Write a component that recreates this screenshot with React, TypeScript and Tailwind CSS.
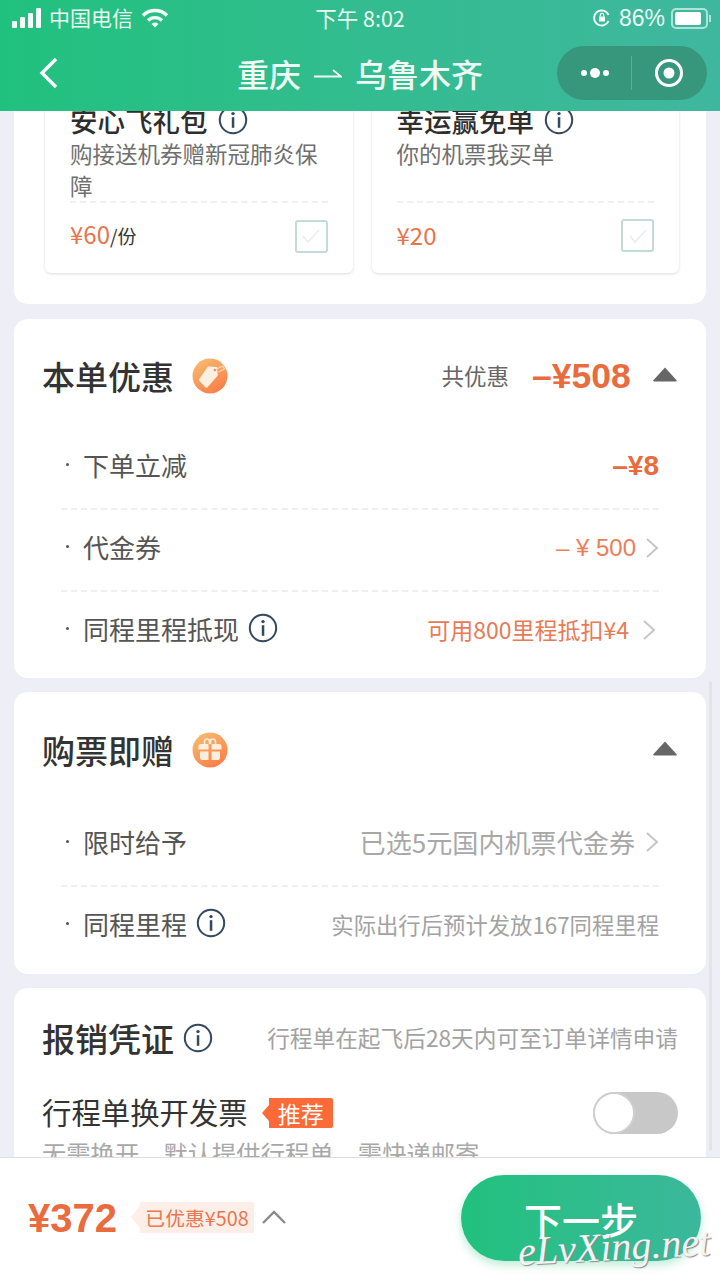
import React from "react";

const FONT = { fontFamily: '"Noto Sans CJK SC","Liberation Sans",sans-serif' };

function Info({ size = 30, className = "" }: { size?: number; className?: string }) {
  return (
    <svg width={size} height={size} viewBox="0 0 30 30" className={`shrink-0 ${className}`} fill="none">
      <circle cx="15" cy="15" r="13.2" stroke="#34495e" strokeWidth="2" />
      <circle cx="15" cy="8.6" r="1.7" fill="#34495e" />
      <rect x="13.8" y="12.2" width="2.5" height="10.6" fill="#34495e" />
    </svg>
  );
}

function Chevron({ className = "" }: { className?: string }) {
  return (
    <svg width="14" height="22" viewBox="0 0 14 22" className={`shrink-0 ${className}`} fill="none">
      <path d="M2 2l10 9-10 9" stroke="#c6c6c6" strokeWidth="2" />
    </svg>
  );
}

function Caret() {
  return (
    <svg width="24" height="15" viewBox="0 0 24 15" className="shrink-0">
      <path d="M12 0.5L23.6 13.2Q24 14.5 22.5 14.5H1.5Q0 14.5 0.4 13.2Z" fill="#666" />
    </svg>
  );
}

function TagBadge() {
  return (
    <svg width="36" height="36" viewBox="0 0 36 36" className="shrink-0">
      <defs>
        <linearGradient id="tg" x1="0.2" y1="0" x2="0.8" y2="1">
          <stop offset="0" stopColor="#f6bb70" />
          <stop offset="1" stopColor="#fb7b45" />
        </linearGradient>
      </defs>
      <circle cx="18" cy="18" r="17.5" fill="url(#tg)" />
      <path d="M16 8.5l9 0.5 0.8 8.5L15.5 29.2a1.6 1.6 0 0 1-2.2 0L7.4 23a1.6 1.6 0 0 1 0-2.2z" fill="#fdf0e2" />
      <circle cx="23" cy="12" r="1.3" fill="#d98d58" />
      <path d="M23.5 11.5l7-3.5 2 3-6 3" fill="none" stroke="#fbd9b8" strokeWidth="1.2" />
    </svg>
  );
}

function GiftBadge() {
  return (
    <svg width="36" height="36" viewBox="0 0 36 36" className="shrink-0">
      <defs>
        <linearGradient id="gg" x1="0.2" y1="0" x2="0.8" y2="1">
          <stop offset="0" stopColor="#f6bb70" />
          <stop offset="1" stopColor="#fb7b45" />
        </linearGradient>
      </defs>
      <circle cx="18" cy="18" r="17.5" fill="url(#gg)" />
      <path d="M12.5 12V9.5a2.5 2.5 0 0 1 5 0V12M18.5 12V9.5a2.5 2.5 0 0 1 5 0V12" fill="none" stroke="#fdeedd" strokeWidth="1.6" />
      <path d="M6.5 14a2 2 0 0 1 2-2h8v5.5H6.5zM19.5 12h8a2 2 0 0 1 2 2v3.5h-10zM8 19.5h8.5V28H10a2 2 0 0 1-2-2zM19.5 19.5H28V26a2 2 0 0 1-2 2h-6.5z" fill="#fdeedd" />
    </svg>
  );
}

function Check() {
  return (
    <div className="w-[33px] h-[33px] rounded-[3px] border-2 border-[#c3dcd3] bg-white flex items-center justify-center">
      <svg width="20" height="16" viewBox="0 0 20 16" fill="none">
        <path d="M2 8l5 6L18 2" stroke="#e7efeb" strokeWidth="1.6" />
      </svg>
    </div>
  );
}

function Product({ title, desc, price, unit }: { title: string; desc: string; price: string; unit?: string }) {
  return (
    <div className="flex-1 h-[170px] bg-white rounded-[6px] shadow-[0_1px_3px_rgba(0,0,0,0.14)] px-[25px] flex flex-col">
      <div className="flex items-center gap-[10px] h-[36px] -mt-[1px]">
        <span className="text-[27.5px] leading-[36px] font-medium text-[#2e2e2e] whitespace-nowrap">{title}</span>
        <Info size={30} />
      </div>
      <div className="text-[22.5px] leading-[32px] text-[#6f6f6f] h-[64px] -mt-[1px] mr-[-2px]">{desc}</div>
      <div className="border-t-2 border-dashed border-[#f0f0f0] mt-0 flex items-center justify-between pt-[16px]">
        <span className="text-[24px] leading-[34px] text-[#e8744a] -mt-[2px]">
          {price}
          {unit && <span className="text-[#333] text-[19px]">{unit}</span>}
        </span>
        <Check />
      </div>
    </div>
  );
}

function Row({ children, right, last }: { children: React.ReactNode; right: React.ReactNode; last?: boolean }) {
  return (
    <div className={`h-[82px] flex items-center justify-between ${last ? "pb-[7px]" : "pb-[5px] border-b-2 border-dashed border-[#efefef]"}`}>
      <div className="flex items-center text-[26px] text-[#555] -mt-[3px]">
        <span className="w-[3px] h-[3px] rounded-full bg-[#555] ml-[5px] mr-[14px]" />
        {children}
      </div>
      <div className="flex items-center">{right}</div>
    </div>
  );
}

function Battery() {
  return (
    <div className="flex items-center">
      <div className="w-[37px] h-[21px] rounded-[5px] border-2 border-[#ffffff99] p-[2px]">
        <div className="w-[26px] h-full bg-white rounded-[2px]" />
      </div>
      <div className="w-[2px] h-[7px] bg-[#ffffff99] ml-[1px]" />
    </div>
  );
}

export default function App() {
  return (
    <div className="relative w-[720px] h-[1280px] overflow-hidden bg-[#eeeef6] flex flex-col" style={FONT}>
      <header className="relative z-10 h-[111px] shrink-0 bg-gradient-to-r from-[#20c17e] to-[#3fb79f] text-white flex flex-col">
        <div className="h-[36px] flex items-center justify-between pl-[12px] pr-[9px] text-[21px] text-[#eafaf3]">
          <div className="flex items-center w-[230px]">
            <svg width="30" height="20" viewBox="0 0 30 20" fill="#f4fffa" className="shrink-0">
              <rect x="0" y="13" width="5" height="7" rx="1" />
              <rect x="8" y="9" width="5" height="11" rx="1" />
              <rect x="16" y="5" width="5" height="15" rx="1" />
              <rect x="24" y="0" width="5" height="20" rx="1" />
            </svg>
            <span className="ml-[7px] tracking-[0]">中国电信</span>
            <svg width="28" height="20" viewBox="0 0 28 20" className="ml-[8px]" fill="none" stroke="#f4fffa" strokeWidth="3.4">
              <path d="M2 7.5a17 17 0 0 1 24 0" />
              <path d="M7 12.5a10 10 0 0 1 14 0" />
              <path d="M14 19.5l-3.5-3.5a5 5 0 0 1 7 0z" fill="#f4fffa" stroke="none" />
            </svg>
          </div>
          <span className="text-[21.5px] whitespace-nowrap -ml-[3px]">下午 8:02</span>
          <div className="flex items-center w-[230px] justify-end">
            <svg width="20" height="20" viewBox="0 0 20 20" fill="none" stroke="#f4fffa" strokeWidth="1.8">
              <path d="M16.5 13a7.5 7.5 0 1 1 0-6" />
              <rect x="7" y="8.5" width="6" height="5" fill="#f4fffa" stroke="none" />
              <path d="M8.3 8.5V7a1.7 1.7 0 0 1 3.4 0v1.5" strokeWidth="1.2" />
            </svg>
            <span className="ml-[7px] mr-[6px] text-[23px]" style={{ fontFamily: '"Liberation Sans",sans-serif' }}>86%</span>
            <Battery />
          </div>
        </div>
        <div className="flex-1 flex items-center justify-between pl-[39px] pr-[13px] pb-[2px]">
          <svg width="20" height="32" viewBox="0 0 20 32" fill="none" className="shrink-0">
            <path d="M17 2L3 16l14 14" stroke="#fff" strokeWidth="3.4" />
          </svg>
          <div className="flex-1 flex items-center justify-center text-[32px] leading-[40px] font-medium text-[#effaf5] whitespace-nowrap pl-[104px]">
            <span>重庆</span>
            <svg width="28" height="10" viewBox="0 0 28 10" fill="none" className="mx-[13px] shrink-0">
              <path d="M0 8.5H27L19 2" stroke="#effaf5" strokeWidth="1.8" />
            </svg>
            <span>乌鲁木齐</span>
          </div>
          <div className="w-[150px] h-[54px] rounded-full bg-[#36977c] flex items-center shrink-0">
            <div className="flex-1 flex items-center justify-center gap-[3px] pl-[2px]">
              <span className="w-[6px] h-[6px] rounded-full bg-white" />
              <span className="w-[10px] h-[10px] rounded-full bg-white" />
              <span className="w-[6px] h-[6px] rounded-full bg-white" />
            </div>
            <div className="w-px h-[34px] bg-[#5cae97]" />
            <div className="w-[75px] flex justify-center pr-[2px]">
              <svg width="30" height="30" viewBox="0 0 30 30" fill="none">
                <circle cx="15" cy="15" r="12.5" stroke="#fff" strokeWidth="3" />
                <circle cx="15" cy="15" r="5.5" fill="#fff" />
              </svg>
            </div>
          </div>
        </div>
      </header>

      <main className="relative flex-1 overflow-hidden px-[14px]">
        <section className="-mt-[8px] h-[201px] bg-white rounded-b-[14px] pl-[31px] pr-[27px] flex gap-[19px]">
          <div className="flex-1 flex items-start min-w-0">
            <Product title="安心飞礼包" desc="购接送机券赠新冠肺炎保障" price="¥60" unit="/份" />
          </div>
          <div className="flex-1 flex items-start min-w-0">
            <Product title="幸运赢免单" desc="你的机票我买单" price="¥20" />
          </div>
        </section>

        <section className="mt-[15px] h-[359px] bg-white rounded-[14px] pl-[28px] pr-[29px]">
          <div className="h-[114px] flex items-center justify-between pb-[30px] pt-[30px]">
            <div className="flex items-center gap-[18px]">
              <h2 className="text-[33px] leading-[44px] font-medium text-[#333]">本单优惠</h2>
              <TagBadge />
            </div>
            <div className="flex items-center">
              <span className="text-[22.5px] text-[#666]">共优惠</span>
              <span className="ml-[23px] w-[100px] text-[35.5px] leading-[40px] font-bold text-[#e96b3e] whitespace-nowrap" style={{ fontFamily: '"Liberation Sans",sans-serif' }}>–¥508</span>
              <span className="ml-[21px] -mt-[4px] flex"><Caret /></span>
            </div>
          </div>
          <div className="-mt-[5px] pl-[19px] pr-[18px]">
            <Row right={<span className="text-[28px] font-bold text-[#e96b3e]" style={{ fontFamily: '"Liberation Sans",sans-serif' }}>–¥8</span>}>下单立减</Row>
            <Row right={<><span className="text-[24px] text-[#e98059]" style={{ fontFamily: '"Liberation Sans",sans-serif' }}>– ¥ 500</span><Chevron className="ml-[9px]" /></>}>代金券</Row>
            <Row last right={<><span className="text-[23px] text-[#e87a55]">可用800里程抵扣¥4</span><Chevron className="ml-[13px] mr-[3px]" /></>}>
              <span>同程里程抵现</span>
              <Info className="ml-[9px]" />
            </Row>
          </div>
        </section>

        <section className="mt-[14px] h-[282px] bg-white rounded-[14px] pl-[28px] pr-[29px]">
          <div className="h-[114px] flex items-center justify-between pb-[29px] pt-[31px]">
            <div className="flex items-center gap-[18px]">
              <h2 className="text-[33px] leading-[44px] font-medium text-[#333]">购票即赠</h2>
              <GiftBadge />
            </div>
            <span className="-mt-[4px] flex"><Caret /></span>
          </div>
          <div className="-mt-[1px] pl-[19px] pr-[18px]">
            <Row right={<><span className="text-[26.1px] text-[#a8a8a8]">已选5元国内机票代金券</span><Chevron className="ml-[10px]" /></>}>限时给予</Row>
            <Row last right={<span className="text-[22.35px] text-[#a2a2a2]">实际出行后预计发放167同程里程</span>}>
              <span>同程里程</span>
              <Info className="ml-[9px]" />
            </Row>
          </div>
        </section>

        <section className="mt-[14px] h-[220px] bg-white rounded-t-[14px] pl-[28px] pr-[28px] pt-[28px]">
          <div className="flex items-center h-[44px]">
            <h2 className="text-[33px] leading-[44px] font-medium text-[#333]">报销凭证</h2>
            <Info className="ml-[9px]" />
            <span className="ml-auto text-[22.7px] text-[#a2a2a2] whitespace-nowrap">行程单在起飞后28天内可至订单详情申请</span>
          </div>
          <div className="flex items-center h-[44px] mt-[31px]">
            <span className="text-[29.4px] text-[#333] whitespace-nowrap -mt-[3px]">行程单换开发票</span>
            <span className="ml-[14px] w-0 h-0 border-y-[8px] border-y-transparent border-r-[7px] border-r-[#fb6a37]" />
            <span className="w-[64px] h-[30px] bg-[#fb6a37] text-white text-[23px] leading-[30px] text-center rounded-r-[2px]">推荐</span>
            <span className="ml-auto w-[85px] h-[42px] rounded-full bg-[#c8c8c8] relative">
              <span className="absolute left-0 top-0 w-[42px] h-[42px] rounded-full bg-white border-2 border-[#cfcfcf]" />
            </span>
          </div>
          <div className="text-[24.3px] leading-[32px] text-[#a8a8a8] mt-[2px] whitespace-nowrap">无需换开，默认提供行程单，需快递邮寄</div>
        </section>

        <div className="absolute right-[8px] top-[570px] w-[3px] h-[470px] bg-[#e4e4e8] rounded-full" />
      </main>

      <footer className="relative z-10 h-[123px] shrink-0 bg-white border-t border-[#dedede] flex items-center pl-[28px] pr-[19px]">
        <span className="text-[40px] leading-[48px] font-bold text-[#e96b3e] w-[91px] whitespace-nowrap -mt-[3px]" style={{ fontFamily: '"Liberation Sans",sans-serif' }}>¥372</span>
        <span className="ml-[12px] w-0 h-0 border-y-[11px] border-y-transparent border-r-[9px] border-r-[#fdeee8] -mt-[4px]" />
        <span className="h-[31px] w-[114px] bg-[#fdeee8] text-[#e8764f] text-[19.8px] leading-[31px] text-center whitespace-nowrap -mt-[4px]">已优惠¥508</span>
        <svg width="26" height="16" viewBox="0 0 26 16" fill="none" className="ml-[7px] -mt-[4px]">
          <path d="M2 14L13 3l11 11" stroke="#8a8a8a" strokeWidth="2.4" />
        </svg>
        <button className="ml-auto w-[240px] h-[86px] rounded-full bg-gradient-to-r from-[#20c17e] to-[#3bb89b] text-white text-[38px] font-medium shadow-[0_4px_10px_rgba(32,193,126,0.3)] -mt-[2px]">下一步</button>
        <span
          className="absolute right-[10px] top-[69px] text-[40px] leading-[40px] italic text-[#f4f4f4] whitespace-nowrap [text-shadow:1px_1px_1px_#8a8a8a] -rotate-[3deg]"
          style={{ fontFamily: '"Liberation Serif",serif' }}
        >
          eLvXing.net
        </span>
      </footer>
    </div>
  );
}
